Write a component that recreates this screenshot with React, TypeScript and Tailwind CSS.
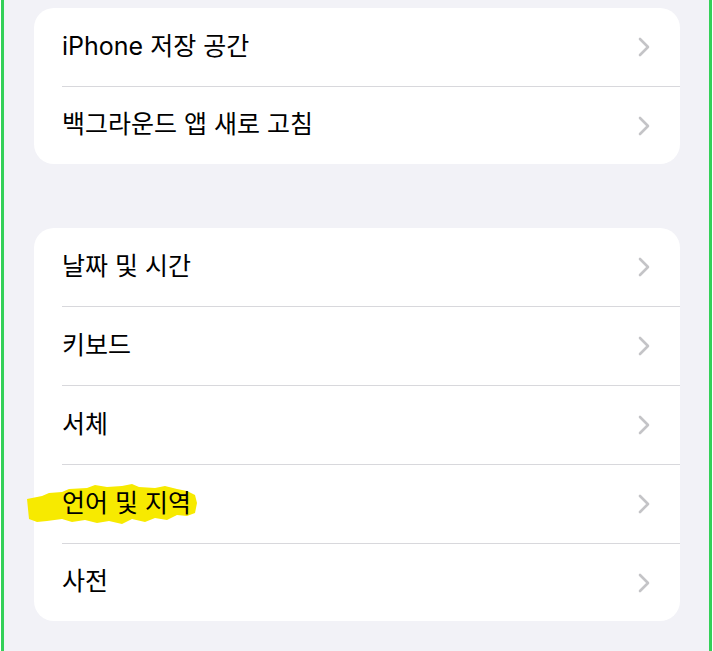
const groups: string[][] = [
  ["iPhone 저장 공간", "백그라운드 앱 새로 고침"],
  ["날짜 및 시간", "키보드", "서체", "언어 및 지역", "사전"],
];

function Chevron() {
  return (
    <svg width="12" height="20" viewBox="0 0 12 20" className="shrink-0">
      <polyline
        points="2,2 10,10 2,18"
        fill="none"
        stroke="#c4c4c7"
        strokeWidth="2.6"
        strokeLinecap="round"
        strokeLinejoin="round"
      />
    </svg>
  );
}

// yellow marker stroke drawn behind one label
function Highlight() {
  return (
    <svg
      width="170"
      height="42"
      viewBox="0 0 170 42"
      className="pointer-events-none absolute left-[-35px] top-[-8px]"
    >
      <path
        d="M0,16 L15,13 L22,10 L35,9 L42,6 L60,5 L68,2 L80,4 L95,3 L105,1 L112,4 L128,5 L138,3 L150,6 L160,8 L168,12 L170,20 L168,30 L160,33 L150,32 L140,37 L128,35 L118,39 L105,36 L95,41 L82,38 L70,40 L58,37 L45,39 L35,36 L20,38 L10,39 L2,36 Z"
        fill="#f7ea00"
      />
    </svg>
  );
}

function Row({ label, last }: { label: string; last: boolean }) {
  return (
    <div className="relative flex items-center pl-[28px]">
      <div
        className={
          "flex flex-1 items-center pr-[30px] " +
          (last ? "h-[77px]" : "h-[79px] border-b border-[#d8d8dc]")
        }
      >
        <div className="relative flex-1">
          {label === "언어 및 지역" && <Highlight />}
          <span className="relative text-[25px] leading-none text-black">
            {label}
          </span>
        </div>
        <Chevron />
      </div>
    </div>
  );
}

export default function App() {
  return (
    <div className="h-[651px] w-[713px] bg-white">
      <div
        className="ml-[1px] h-full w-[711px] border-x-[3px] border-[#34d058] bg-[#f2f2f7] pl-[30px] pr-[29px] pt-[8px]"
        style={{ fontFamily: '"Inter", "Noto Sans CJK KR", sans-serif' }}
      >
        <div className="flex flex-col gap-[64px]">
          {groups.map((g, i) => (
            <div key={i} className="rounded-[20px] bg-white">
              {g.map((label, j) => (
                <Row key={label} label={label} last={j === g.length - 1} />
              ))}
            </div>
          ))}
        </div>
      </div>
    </div>
  );
}
